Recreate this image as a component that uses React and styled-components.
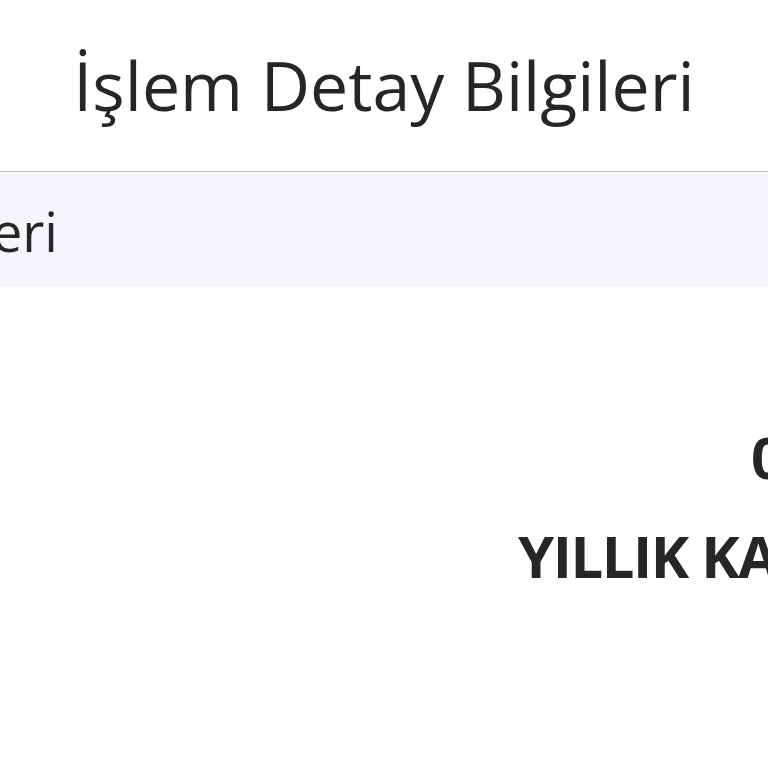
import React from 'react';
import styled, { createGlobalStyle } from 'styled-components';

const GlobalStyle = createGlobalStyle`
  html, body {
    margin: 0;
    padding: 0;
    background: #ffffff;
    overflow: hidden;
  }
  body {
    font-family: "Open Sans", "Noto Sans", sans-serif;
    color: #262626;
  }
`

const Page = styled.div`
  width: 768px;
  min-height: 768px;
  display: flex;
  flex-direction: column;
  overflow: hidden;
`

const Header = styled.header`
  padding: 51px 0 52px;
  border-bottom: 1px solid #c4c4c4;
  display: flex;
  justify-content: center;
`

const Title = styled.h1`
  margin: 0;
  font-size: 68px;
  line-height: 1;
  font-weight: 400;
  white-space: nowrap;
`

const Band = styled.div`
  background: #f5f6fa;
  padding: 32px 0 29px;
  display: flex;
`

/* the breadcrumb text runs off the left edge, so it is pinned to its right end */
const BandTrack = styled.div`
  width: ${(p) => p.$end}px;
  display: flex;
  justify-content: flex-end;
`

const BandText = styled.span`
  font-size: 54px;
  line-height: 1;
  white-space: nowrap;
`

const Details = styled.section`
  padding-top: 141px;
  display: flex;
  flex-direction: column;
  gap: 41px;
`

const Row = styled.div`
  padding-left: ${(p) => p.$indent}px;
  white-space: nowrap;
`

const Strong = styled.span`
  font-size: 58px;
  line-height: 1;
  font-weight: 700;
  letter-spacing: -1.5px;
  display: block;
`

const App = () => {
  return (
    <Page>
      <GlobalStyle />
      <Header>
        <Title>İşlem Detay Bilgileri</Title>
      </Header>
      <Band>
        <BandTrack $end={58}>
          <BandText>Kart Bilgileri</BandText>
        </BandTrack>
      </Band>
      <Details>
        <Row $indent={751}>
          <Strong>0,00 TL</Strong>
        </Row>
        <Row $indent={518}>
          <Strong>YILLIK KART ÜCRETİ</Strong>
        </Row>
      </Details>
    </Page>
  );
};

export default App;
